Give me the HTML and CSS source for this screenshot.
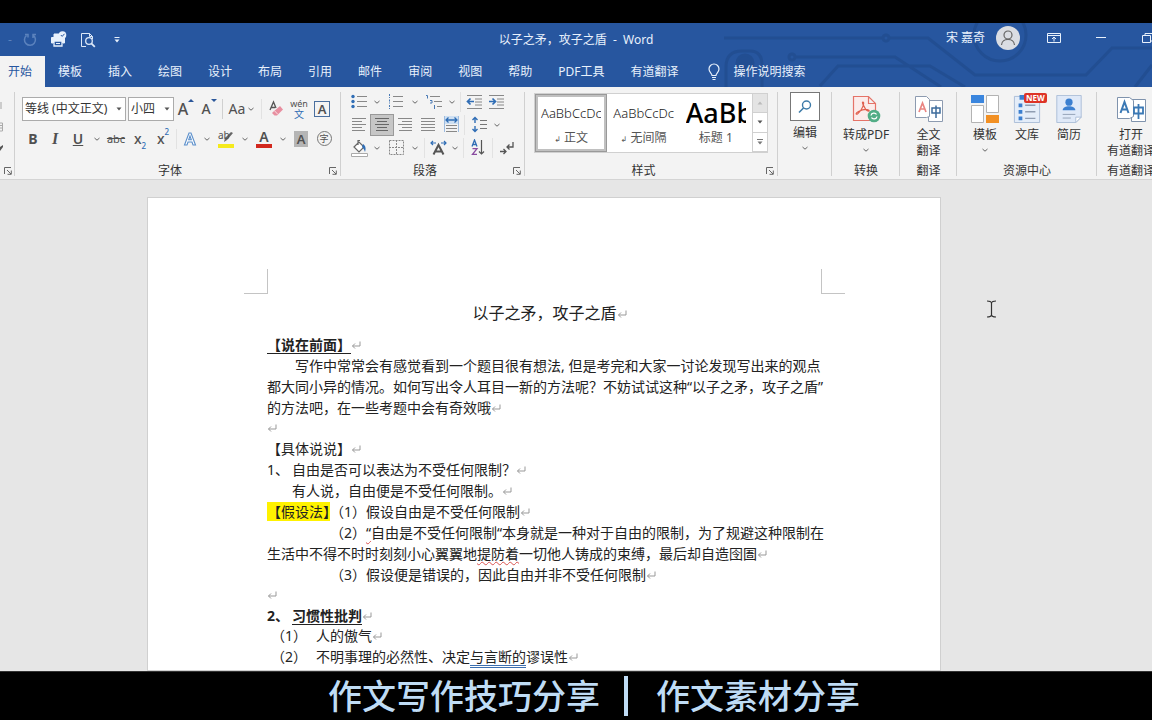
FILE: index.html
```html
<!DOCTYPE html>
<html lang="zh-CN">
<head>
<meta charset="utf-8">
<title>以子之矛，攻子之盾 - Word</title>
<link rel="stylesheet" href="styles.css">
</head>
<body>
<svg class="defs" aria-hidden="true">
  <symbol id="chev" viewBox="0 0 8 8"><path d="M1.500 3 4 5.200 6.500 3" fill="none" stroke="#666"/></symbol>
  <symbol id="tri" viewBox="0 0 8 8"><path d="M1.500 2.500h5L4 5.500z" fill="#555"/></symbol>
  <symbol id="launch" viewBox="0 0 8 8"><path d="M.5 7V.5H7M3 3l4 4M7.300 3.500v3.800H3.500" fill="none" stroke="#666"/></symbol>
  <symbol id="ret" viewBox="0 0 10 10"><path d="M9 1.500V6H1.500M4 3.500 1.500 6 4 8.500" fill="none" stroke="#999"/></symbol>
</svg>

<div class="band"></div>

<header class="head">
  <svg class="circuit" viewBox="0 0 432 64" aria-hidden="true">
    <g fill="none" stroke="#1f4a8a" stroke-width="3" opacity=".6">
      <path d="M4 15h158M170 15h38l47 37h111l26-27h40"/><circle cx="166" cy="15" r="3"/>
      <circle cx="72" cy="34" r="3"/><path d="M76 34h99l46 30M100 63l18-20h92l35 21"/>
      <circle cx="280" cy="12" r="26"/><path d="M6 64V44q0-16 16-16h8q12 0 12 14v22M415 64l17-22"/>
      <circle cx="25" cy="40" r="8" fill="#1f4a8a"/>
    </g>
  </svg>
  <div class="titlebar">
    <div class="quick">
      <span class="dash">-</span>
      <button aria-label="重做"><svg width="16" height="16" viewBox="0 0 16 16"><path d="M11 3.200A5.500 5.500 0 1 1 4.500 3.500M3 2.500h3v3M11 6V2.500h3" fill="none" stroke="#5b82bd" stroke-width="1.500"/></svg></button>
      <button aria-label="快速打印"><svg width="17" height="17" viewBox="0 0 17 17"><path d="M4 6V3h6v3M3 12H1.500V6.500h13V12H13" fill="#e8f1fc" stroke="#e8f1fc"/><path d="M4 10h8v5H4z" fill="#27569f" stroke="#e8f1fc" stroke-width="1.300"/><path d="M6 12.500h4" stroke="#e8f1fc"/><circle cx="12.500" cy="4" r="3.800" fill="#e8f1fc"/><path d="m10.800 4 1.400 1.400 2.300-2.600" fill="none" stroke="#27569f"/></svg></button>
      <button aria-label="打印预览"><svg width="16" height="16" viewBox="0 0 16 16"><path d="M6 14.500H1.500v-13h8l3 3V7M9.500 1.500v3h3" fill="none" stroke="#dce8f8"/><circle cx="9" cy="9" r="3.300" fill="none" stroke="#dce8f8" stroke-width="1.300"/><path d="m11.300 11.300 3.500 3.500" stroke="#dce8f8" stroke-width="1.800"/></svg></button>
      <button aria-label="自定义快速访问工具栏"><svg width="8" height="8" viewBox="0 0 8 8"><path d="M1.500 1.500h5" stroke="#e8f1fc"/><path d="M1.500 3.500h5L4 6.500z" fill="#e8f1fc"/></svg></button>
    </div>
    <h1>以子之矛，攻子之盾&nbsp; -&nbsp; Word</h1>
    <div class="account">
      <span>宋 嘉奇</span>
      <svg class="avatar" width="24" height="24" viewBox="0 0 24 24"><circle cx="12" cy="12" r="12" fill="#dadde3"/><circle cx="12" cy="9" r="4" fill="none" stroke="#666" stroke-width="1.200"/><path d="M5.500 19c.5-7.500 12.500-7.500 13 0" fill="none" stroke="#666" stroke-width="1.200"/></svg>
      <button class="win" aria-label="功能区显示选项"><svg width="14" height="12" viewBox="0 0 14 12"><path d="M.5 1.500h13v9H.5zM.5 3.500h13M7 9.500v-4M5 7l2-2 2 2" fill="none" stroke="#e8f1fc"/></svg></button>
      <button class="win" aria-label="最小化"><svg width="12" height="12" viewBox="0 0 12 12"><path d="M1 5.500h10" stroke="#e8f1fc"/></svg></button>
      <button class="win" aria-label="还原"><svg width="12" height="12" viewBox="0 0 12 12"><path d="M.5 3.500h8v7h-8zM3 3V1.500h8V9H9" fill="none" stroke="#e8f1fc"/></svg></button>
    </div>
  </div>
  <nav class="tabs">
    <button class="active">开始</button><button>模板</button><button>插入</button><button>绘图</button><button>设计</button><button>布局</button><button>引用</button><button>邮件</button><button>审阅</button><button>视图</button><button>帮助</button><button>PDF工具</button><button>有道翻译</button>
    <button class="tell"><svg width="14" height="18" viewBox="0 0 14 18"><path d="M5 12.500C5 10.500 2 9.500 2 6a5 5 0 0 1 10 0c0 3.500-3 4.500-3 6.500zM5 14.500h4M5.500 16.500h3" fill="none" stroke="#e8f1fc" stroke-width="1.200"/></svg>操作说明搜索</button>
  </nav>
</header>

<section class="ribbon">
  <div class="group g-clip">
    <div class="clip">
      <svg width="8" height="12" viewBox="0 0 8 12"><path d="M0 2h2v7H0z" fill="#ccc"/></svg>
      <svg width="8" height="12" viewBox="0 0 8 12"><path d="M0 2h2.500v8H0M0 4.500h2.500M0 7h2.500" fill="none" stroke="#aaa"/></svg>
      <svg width="8" height="12" viewBox="0 0 8 12"><path d="m0 5 3-2v2L0 9z" fill="#555"/></svg>
    </div>
    <div class="glabel"><button class="launch" aria-label="剪贴板选项"><svg width="8" height="8"><use href="#launch"/></svg></button></div>
  </div>

  <div class="group g-font">
    <div class="rows wide">
      <div class="row">
        <label class="combo c-font"><select aria-label="字体"><option>等线 (中文正文)</option></select><svg width="8" height="8"><use href="#tri"/></svg></label>
        <label class="combo c-size"><select aria-label="字号"><option>小四</option></select><svg width="8" height="8"><use href="#tri"/></svg></label>
        <button class="b w24 big" aria-label="增大字号">A<svg class="sup" width="6" height="5" viewBox="0 0 6 5"><path d="M0 4 3 1l3 3z" fill="#2b579a"/></svg></button>
        <button class="b mid" aria-label="减小字号">A<svg class="sup" width="6" height="5" viewBox="0 0 6 5"><path d="m0 1 3 3 3-3z" fill="#2b579a"/></svg></button>
        <i class="sep"></i>
        <button class="b w34 aa" aria-label="更改大小写">Aa<svg width="8" height="8"><use href="#chev"/></svg></button>
        <i class="sep pale"></i>
        <button class="b w24" aria-label="清除格式"><svg width="16" height="18" viewBox="0 0 16 18"><path d="M2 10 5.500 2 8 8M3.500 7.500h3.500" fill="none" stroke="#555" stroke-width="1.300"/><path d="m5 12 7-6 3 3.500-6 6H6.500L4 13z" fill="#e88fa0"/><path d="m6.500 10.800 3.300 3.500" stroke="#f8e0e4"/></svg></button>
        <button class="b wen" aria-label="拼音指南"><span>wén</span><span class="blue">文</span></button>
        <button class="b w24" aria-label="字符边框"><span class="boxed">A</span></button>
      </div>
      <div class="row">
        <button class="b bold">B</button><button class="b ital">I</button><button class="b w24 und"><u>U</u></button>
        <button class="b w14" aria-label="下划线样式"><svg width="8" height="8"><use href="#chev"/></svg></button>
        <button class="b w24 strike"><s>abc</s></button><button class="b sub w24">x<sub>2</sub></button><button class="b sub">x<sup>2</sup></button>
        <i class="sep pale"></i>
        <button class="b" aria-label="文本效果"><svg width="14" height="18" viewBox="0 0 14 18"><path d="M1.500 15 6 3h2l4.500 12H10l-1-3H5l-1 3zM5.700 9.800h2.600L7 6z" fill="#fff" stroke="#5b8fcb" stroke-width="1.100"/></svg></button>
        <button class="b w10" aria-label="文本效果样式"><svg width="8" height="8"><use href="#chev"/></svg></button>
        <button class="b w28 hl" aria-label="突出显示"><span>ab</span><svg width="16" height="18" viewBox="0 0 16 18"><path d="m15 3-6 7-3 2 1-4 6-6z" fill="#666"/><path d="M0 14h16v4H0z" fill="#f5ea1c"/></svg></button>
        <button class="b w10" aria-label="突出显示颜色"><svg width="8" height="8"><use href="#chev"/></svg></button>
        <button class="b w28 fc" aria-label="字体颜色"><span>A</span></button>
        <button class="b w10" aria-label="字体颜色选择"><svg width="8" height="8"><use href="#chev"/></svg></button>
        <button class="b w24" aria-label="字符底纹"><span class="shade">A</span></button>
        <button class="b" aria-label="带圈字符"><span class="ring">字</span></button>
      </div>
    </div>
    <div class="glabel">字体<button class="launch" aria-label="字体选项"><svg width="8" height="8"><use href="#launch"/></svg></button></div>
  </div>

  <div class="group g-para">
    <div class="rows tight">
      <div class="row">
        <button class="b" aria-label="项目符号"><svg width="18" height="16" viewBox="0 0 18 16"><g fill="#2f6db5"><circle cx="3" cy="2.500" r="1.700"/><circle cx="3" cy="7.500" r="1.700"/><circle cx="3" cy="12.500" r="1.700"/></g><path d="M7 2.500h10M7 7.500h10M7 12.500h10" stroke="#888"/></svg></button>
        <button class="b w14" aria-label="项目符号样式"><svg width="8" height="8"><use href="#chev"/></svg></button>
        <button class="b w24" aria-label="编号"><svg width="18" height="16" viewBox="0 0 18 16"><path d="M2.500 0v4M2.500 5.500v4M2.500 11v4" stroke="#4a7ab5" stroke-dasharray="2 1"/><path d="M6 2.500h10M6 7.500h10M6 12.500h10" stroke="#888"/></svg></button>
        <button class="b w14" aria-label="编号样式"><svg width="8" height="8"><use href="#chev"/></svg></button>
        <button class="b w24" aria-label="多级列表"><svg width="18" height="16" viewBox="0 0 18 16"><path d="M1 1.500h1.500v3M5 6.500h2V9H5M9.500 11v4" fill="none" stroke="#4a7ab5"/><path d="M5 2.500h10M9 7.500h8M12 12.500h5" stroke="#888"/></svg></button>
        <button class="b w10" aria-label="多级列表样式"><svg width="8" height="8"><use href="#chev"/></svg></button>
        <i class="sep pale"></i>
        <button class="b" aria-label="减少缩进量"><svg width="17" height="16" viewBox="0 0 17 16"><path d="M1 1.500h15M9 5h7M9 8h7M9 11h7M1 14.500h15" stroke="#888"/><path d="M8 7.500H2M4.500 4.500l-3 3 3 3" fill="none" stroke="#2f6db5" stroke-width="1.700"/></svg></button>
        <button class="b" aria-label="增加缩进量"><svg width="17" height="16" viewBox="0 0 17 16"><path d="M1 1.500h15M9 5h7M9 8h7M9 11h7M1 14.500h15" stroke="#888"/><path d="M1 7.500h6M4.500 4.500l3 3-3 3" fill="none" stroke="#2f6db5" stroke-width="1.700"/></svg></button>
      </div>
      <div class="row">
        <button class="b" aria-label="左对齐"><svg width="14" height="16" viewBox="0 0 14 16"><path d="M0 1.500h14M0 4.500h10M0 7.500h14M0 10.500h10M0 13.500h13" stroke="#888"/></svg></button>
        <button class="b on w24" aria-label="居中"><svg width="14" height="16" viewBox="0 0 14 16"><path d="M0 1.500h14M2 4.500h10M0 7.500h14M2 10.500h10M1 13.500h12" stroke="#666"/></svg></button>
        <button class="b" aria-label="右对齐"><svg width="14" height="16" viewBox="0 0 14 16"><path d="M0 1.500h14M4 4.500h10M0 7.500h14M4 10.500h10M1 13.500h13" stroke="#888"/></svg></button>
        <button class="b w24" aria-label="两端对齐"><svg width="14" height="16" viewBox="0 0 14 16"><path d="M0 1.500h14M0 4.500h14M0 7.500h14M0 10.500h14M0 13.500h14" stroke="#888"/></svg></button>
        <button class="b" aria-label="分散对齐"><svg width="15" height="17" viewBox="0 0 15 17"><path d="M0 0h15v8H0z" fill="#cfe0f2"/><path d="M.5 0v16M14.500 0v16" stroke="#9dbce0"/><path d="M2 4h11M4.500 1.500 2 4l2.500 2.500M10.500 1.500 13 4l-2.500 2.500" fill="none" stroke="#2f6db5" stroke-width="1.300"/><path d="M2 9.500h11M2 12.500h11M2 15.500h11" stroke="#888"/></svg></button>
        <i class="sep pale"></i>
        <button class="b w24" aria-label="行距"><svg width="16" height="17" viewBox="0 0 16 17"><path d="M4 2v5M1.500 4 4 1.500 6.500 4M4 10v5M1.500 13 4 15.500 6.500 13" fill="none" stroke="#2f6db5" stroke-width="1.400"/><path d="M9 4.500h7M9 8.500h7M9 12.500h7" stroke="#777"/></svg></button>
        <button class="b w10" aria-label="行距选项"><svg width="8" height="8"><use href="#chev"/></svg></button>
      </div>
      <div class="row">
        <button class="b" aria-label="底纹"><svg width="17" height="18" viewBox="0 0 17 18"><path d="m3 8 5-5 5 5-5 5zM7 6V1.500h2" fill="#fff" stroke="#666" stroke-width="1.200"/><path d="M12 5c3 2 3 5 2 8-1-3-2-4-3-5z" fill="#2f6db5"/><path d="M.5 14.500h16v3H.5z" fill="#fff" stroke="#aaa"/></svg></button>
        <button class="b w14" aria-label="底纹颜色"><svg width="8" height="8"><use href="#chev"/></svg></button>
        <button class="b w24" aria-label="边框"><svg width="15" height="15" viewBox="0 0 15 15"><path d="M.5.5h14v14H.5zM7.500 0v15M0 7.500h15" fill="none" stroke="#888" stroke-dasharray="2 1"/></svg></button>
        <button class="b w14" aria-label="边框样式"><svg width="8" height="8"><use href="#chev"/></svg></button>
        <i class="sep pale"></i>
        <button class="b" aria-label="中文版式"><svg width="17" height="16" viewBox="0 0 17 16"><path d="M3.500 14.500 8.500 5l5 9.500M5.500 11.500h6" fill="none" stroke="#555" stroke-width="2"/><path d="M1 3h5M3 1 1 3l2 2M16 3h-5M14 1l2 2-2 2" fill="none" stroke="#2f6db5" stroke-width="1.200"/></svg></button>
        <button class="b w10" aria-label="中文版式选项"><svg width="8" height="8"><use href="#chev"/></svg></button>
        <i class="sep pale"></i>
        <button class="b w24" aria-label="排序"><svg width="14" height="17" viewBox="0 0 14 17"><path d="m1 7.500 2.500-6.500L6 7.500M2 5.500h3" fill="none" stroke="#2f6db5" stroke-width="1.300"/><path d="M1.500 9.700H6l-4.500 5.600H6" fill="none" stroke="#8a4ba0" stroke-width="1.300"/><path d="M10.500 1v14M8 12.500l2.500 2.500 2.500-2.500" fill="none" stroke="#555" stroke-width="1.200"/></svg></button>
        <i class="sep pale"></i>
        <button class="b w24" aria-label="显示编辑标记"><svg width="16" height="14" viewBox="0 0 16 14"><path d="M14 1v5H8M10.500 3.500 8 6l2.500 2.500M1 10.500h6M4.500 8 7 10.500 4.500 13" fill="none" stroke="#555" stroke-width="1.300"/></svg></button>
      </div>
    </div>
    <div class="glabel">段落<button class="launch" aria-label="段落选项"><svg width="8" height="8"><use href="#launch"/></svg></button></div>
  </div>

  <div class="group g-style">
    <div class="gallery">
      <button class="style sel"><span class="sample">AaBbCcDc</span><span class="sname"><small>↲</small> 正文</span></button>
      <button class="style"><span class="sample">AaBbCcDc</span><span class="sname"><small>↲</small> 无间隔</span></button>
      <button class="style"><span class="sample h">AaBb</span><span class="sname">标题 1</span></button>
      <div class="scroll">
        <button class="off" aria-label="上一行"><svg width="8" height="8" viewBox="0 0 8 8"><path d="M1.500 5.500h5L4 2.500z" fill="#bbb"/></svg></button>
        <button aria-label="下一行"><svg width="8" height="8"><use href="#tri"/></svg></button>
        <button aria-label="其他"><svg width="8" height="8" viewBox="0 0 8 8"><path d="M1 1.500h6" stroke="#777"/><path d="M1.500 3.500h5L4 6.500z" fill="#777"/></svg></button>
      </div>
    </div>
    <div class="glabel">样式<button class="launch" aria-label="样式选项"><svg width="8" height="8"><use href="#launch"/></svg></button></div>
  </div>

  <div class="group g-edit">
    <div class="bigs">
      <button class="bigb"><span class="find"><svg width="14" height="14" viewBox="0 0 14 14"><circle cx="8.500" cy="5" r="4" fill="none" stroke="#3c7aa8" stroke-width="1.400"/><path d="M5.500 8 1 12.500" stroke="#3c7aa8" stroke-width="1.600"/></svg></span>编辑<svg class="dn" width="8" height="8"><use href="#chev"/></svg></button>
    </div>
  </div>

  <div class="group g-pdf">
    <div class="bigs">
      <button class="bigb"><svg width="30" height="28" viewBox="0 0 30 28"><path d="M2.500 1.500h15l7 7v17h-22zM17.500 1.500v7h7" fill="#fbeceb" stroke="#e57368" stroke-width="1.200"/><path d="M12 7c2 0-1 9-5.500 12-2 1-2-1 1-2.500 4-2 8-2.500 10-1.500s-1 2.500-3-1S10.500 7 12 7z" fill="none" stroke="#e0604f" stroke-width="1.200"/><circle cx="23" cy="21" r="6.300" fill="#52ad86"/><path d="M20 20.500c.5-3 4.500-3 5.500-1M26 21.500c-.5 3-4.500 3-5.500 1" fill="none" stroke="#fff" stroke-width="1.300"/></svg>转成PDF<svg class="dn" width="8" height="8"><use href="#chev"/></svg></button>
    </div>
    <div class="glabel">转换</div>
  </div>

  <div class="group g-trans">
    <div class="bigs">
      <button class="bigb"><svg width="30" height="28" viewBox="0 0 30 28"><path d="M14.500 5.500h14v21h-14z" fill="#fff" stroke="#8d9bb0"/><path d="M1.500 1.500h11l3 3v17l-3 1h-11z" fill="#fff" stroke="#8d9bb0"/><path d="m5 17 3.500-9L12 17M6.200 14h4.600" fill="none" stroke="#ea8582" stroke-width="1.700"/><path d="M18 13h8v5h-8zM22 10.500V23" fill="none" stroke="#3e6c9c" stroke-width="1.500"/></svg>全文<br>翻译</button>
    </div>
    <div class="glabel">翻译</div>
  </div>

  <div class="group g-res">
    <div class="bigs">
      <button class="bigb"><svg width="30" height="28" viewBox="0 0 30 28"><path d="M1 0h13v8H1z" fill="#3b86de"/><path d="M16.500.5h12v17h-12zM1.500 10.500h12v17h-12z" fill="#fff" stroke="#b3b3b3"/><path d="M16 20h13v8H16z" fill="#f29023"/></svg>模板<svg class="dn" width="8" height="8"><use href="#chev"/></svg></button>
      <button class="bigb"><span class="new">NEW</span><svg width="28" height="30" viewBox="0 0 28 30"><path d="M.500 1.500h27v28H.500z" fill="#e4edf9" stroke="#a8bbd6"/><g fill="#3b7fd0"><path d="M6 0h5v5H6zM5 9h4v4H5zM5 16h4v4H5zM5 23h4v4H5z"/></g><path d="M12 11h11M12 18h11M12 25h11" stroke="#8f9db2" stroke-width="1.500"/></svg>文库</button>
      <button class="bigb"><svg width="28" height="31" viewBox="0 0 28 31"><path d="M.500.500h27v24l-6 6H.500z" fill="#dfe9f8" stroke="#a8bbd6"/><circle cx="14" cy="8" r="4" fill="#3b7fd0"/><path d="M7 17c0-6 14-6 14 0z" fill="#3b7fd0"/><path d="M7 21.500h14M7 25.500h9" stroke="#8f9db2"/><path d="M21.500 30.500v-6h6z" fill="#fff" stroke="#a8bbd6"/></svg>简历</button>
    </div>
    <div class="glabel">资源中心</div>
  </div>

  <div class="group g-open">
    <div class="bigs">
      <button class="bigb"><svg width="32" height="28" viewBox="0 0 32 28"><path d="M16.500 4.500h14v22h-14z" fill="#fff" stroke="#7f93ad"/><path d="M2.500 2.500h12l4 3v16l-4 2h-12z" fill="#fff" stroke="#7f93ad"/><path d="m5.500 18 4-11 4 11M7 14.500h5" fill="none" stroke="#3b79b5" stroke-width="2"/><path d="M19 12.500h9v6h-9zM23.500 9v15" fill="none" stroke="#3b79b5" stroke-width="1.800"/></svg>打开<br>有道翻译</button>
    </div>
    <div class="glabel">有道翻译</div>
  </div>
</section>

<main class="work">
  <article class="page">
    <div class="marks"><i class="m-left"></i><i class="m-right"></i></div>
    <div class="text">
      <h2>以子之矛，攻子之盾<svg class="ret" width="10" height="10"><use href="#ret"/></svg></h2>
      <p><b class="ul">【说在前面】</b><svg class="ret" width="10" height="10"><use href="#ret"/></svg></p>
      <p class="indent">写作中常常会有感觉看到一个题目很有想法, 但是考完和大家一讨论发现写出来的观点<br>都大同小异的情况。如何写出令人耳目一新的方法呢？不妨试试这种“以子之矛，攻子之盾”<br>的方法吧，在一些考题中会有奇效哦<svg class="ret" width="10" height="10"><use href="#ret"/></svg></p>
      <p class="blank"><svg class="ret" width="10" height="10"><use href="#ret"/></svg></p>
      <p>【具体说说】<svg class="ret" width="10" height="10"><use href="#ret"/></svg></p>
      <p><span class="num">1、</span>自由是否可以表达为不受任何限制？<svg class="ret" width="10" height="10"><use href="#ret"/></svg></p>
      <p class="kai"><span class="num"></span>有人说，自由便是不受任何限制。<svg class="ret" width="10" height="10"><use href="#ret"/></svg></p>
      <p><span class="case"><mark>【假设法<span class="half">】</span></mark></span>（1）假设自由是不受任何限制<svg class="ret" width="10" height="10"><use href="#ret"/></svg></p>
      <p><span class="case"></span>（2）<span class="err">“</span>自由是不受任何限制“本身就是一种对于自由的限制，为了规避这种限制在<br>生活中不得不时时刻刻小心翼翼地<span class="err">提防着</span>一切他人铸成的束缚，最后却自造囹圄<svg class="ret" width="10" height="10"><use href="#ret"/></svg></p>
      <p><span class="case"></span>（3）假设便是错误的，因此自由并非不受任何限制<svg class="ret" width="10" height="10"><use href="#ret"/></svg></p>
      <p class="blank"><svg class="ret" width="10" height="10"><use href="#ret"/></svg></p>
      <p><b><span class="num">2、</span><span class="ul">习惯性批判</span></b><svg class="ret" width="10" height="10"><use href="#ret"/></svg></p>
      <p class="blank"><span class="item">（1）</span>人的傲气<svg class="ret" width="10" height="10"><use href="#ret"/></svg></p>
      <p><span class="item">（2）</span>不明事理的必然性、决定<span class="gram">与言断的</span>谬误性<svg class="ret" width="10" height="10"><use href="#ret"/></svg></p>
    </div>
  </article>
  <svg class="ibeam" width="11" height="18" viewBox="0 0 11 18"><path d="M1 1q4 0 4.500 2Q6 1 10 1M1 17q4 0 4.500-2Q6 17 10 17M5.500 3v12" fill="none" stroke="#333" stroke-width="1.200"/></svg>
</main>

<footer class="caption"><span>作文写作技巧分享</span><i></i><span>作文素材分享</span></footer>
</body>
</html>
```
FILE: styles.css
```css
* { box-sizing: border-box; }
html, body { height: 100%; }
body {
  margin: 0;
  display: flex;
  flex-direction: column;
  overflow: hidden;
  background: #000;
  color: #333;
  font: 12px/16px "Noto Sans", "Noto Sans CJK SC", sans-serif;
}
button {
  margin: 0;
  padding: 0;
  border: 0;
  background: none;
  color: inherit;
  font: inherit;
}
svg { flex: none; }
.defs { position: absolute; width: 0; height: 0; }
.band { flex: none; height: 23px; }

/* title bar and tabs */
.head {
  position: relative;
  flex: none;
  overflow: hidden;
  background: #27569f;
  color: #e8f1fc;
}
.circuit { position: absolute; top: 0; right: 0; width: 432px; height: 64px; }
.titlebar {
  position: relative;
  display: grid;
  grid-template-columns: 1fr auto 1fr;
  align-items: center;
  height: 33px;
}
.titlebar h1 { margin: 0; font-size: 12px; font-weight: 400; }
.quick { display: flex; align-items: center; padding-left: 5px; }
.quick button { display: grid; place-items: center; width: 29px; height: 24px; }
.dash { width: 10px; text-align: center; color: #5b82bd; }
.account {
  display: flex;
  justify-content: flex-end;
  align-items: center;
  height: 30px;
  margin: 0 -19px 3px 0;
}
.avatar { margin: 0 10px 0 11px; }
.win { display: grid; place-items: center; flex: none; width: 47px; height: 30px; }
.tabs { position: relative; display: flex; margin-left: -5px; height: 31px; }
.tabs button { padding: 0 13px; white-space: nowrap; }
.tabs .active { background: #f3f3f3; color: #27569f; }
.tabs .tell { display: flex; align-items: center; gap: 12px; padding-left: 16px; }

/* ribbon */
.ribbon {
  flex: none;
  display: flex;
  overflow: hidden;
  height: 93px;
  background: #f3f3f3;
  border-bottom: 1px solid #d4d4d4;
}
.group {
  position: relative;
  flex: none;
  display: flex;
  flex-direction: column;
  justify-content: space-between;
}
.group::after {
  content: "";
  position: absolute;
  top: 5px;
  right: 0;
  bottom: 3px;
  border-right: 1px solid #d0d0d0;
}
.g-clip { width: 15px; }
.g-font { width: 326px; }
.g-para { width: 184px; }
.g-style { width: 253px; }
.g-edit { width: 54px; }
.g-pdf { width: 68px; }
.g-trans { width: 57px; }
.g-res { width: 140px; }
.g-open { width: 68px; }
.glabel { position: relative; height: 18px; line-height: 20px; text-align: center; }
.glabel:has(.launch) { padding-right: 16px; }
.launch { position: absolute; right: 4px; top: 6px; width: 8px; height: 8px; line-height: 0; }
.clip { display: flex; flex-direction: column; gap: 9px; padding-top: 13px; }

.rows { display: flex; flex-direction: column; }
.wide { gap: 5px; padding: 9px 0 0 7px; }
.tight { padding: 3px 0 0 7px; }
.row { display: flex; align-items: center; height: 25px; }
.tight .row { height: 23px; }
.b {
  position: relative;
  flex: none;
  display: flex;
  align-items: center;
  justify-content: center;
  width: 22px;
  height: 22px;
  color: #505050;
}
.w10 { width: 12px; }
.w14 { width: 14px; }
.w24 { width: 24px; }
.w28 { width: 26px; }
.w34 { width: 34px; }
.sep { flex: none; width: 1px; height: 20px; margin: 0 2px; background: #d0d0d0; }
.sep.pale { background: #e2e2e2; }
.on { background: #c6c6c6; border: 1px solid #999; }
.combo { position: relative; height: 24px; margin-right: 2px; }
.combo select {
  width: 100%;
  height: 24px;
  padding: 0 2px;
  appearance: none;
  border: 1px solid #ababab;
  border-radius: 0;
  background: #fff;
  color: #333;
  font: inherit;
}
.combo svg { position: absolute; right: 3px; top: 8px; }
.c-font { width: 104px; }
.c-size { width: 46px; margin-right: 0; }
.big { font-size: 16px; font-weight: 500; }
.mid { font-size: 14px; font-weight: 500; }
.sup { align-self: flex-start; }
.aa { gap: 2px; font-size: 14px; }
.wen { flex-direction: column; font-size: 9px; line-height: 10px; }
.wen .blue { color: #2f6db5; font-size: 10px; line-height: 10px; }
.boxed { width: 16px; height: 16px; border: 1px solid #4a6f9f; font-weight: 600; font-size: 13px; line-height: 14px; }
.bold { font-size: 14px; font-weight: 700; }
.ital { font: italic 700 16px "Liberation Serif", serif; }
.und { font-size: 14px; font-weight: 600; }
.strike { font-size: 11px; }
.sub { font-size: 14px; font-weight: 500; }
.sub sub, .sub sup { font-size: 8px; color: #2f6db5; line-height: 8px; }
.sub sub { align-self: flex-end; }
.sub sup { align-self: flex-start; }
.hl span { position: absolute; left: 5px; top: 0; font-size: 10px; line-height: 14px; }
.fc span { width: 16px; border-bottom: 4px solid #d2281e; font-size: 14px; font-weight: 600; line-height: 14px; }
.shade { width: 14px; background: #b5b5b5; font-size: 13px; font-weight: 600; line-height: 16px; }
.ring { width: 15px; height: 15px; border: 1px solid #777; border-radius: 50%; font-size: 9px; line-height: 13px; }

/* style gallery */
.gallery {
  display: flex;
  width: 234px;
  height: 60px;
  margin: 6px 0 0 9px;
  border: 1px solid #d0d0d0;
  background: #fff;
}
.style {
  flex: 1;
  display: flex;
  flex-direction: column;
  justify-content: space-between;
  min-width: 0;
  padding: 4px 6px 6px;
}
.style.sel { padding: 1px 3px 3px; border: 3px solid #c0c0c0; outline: 1px solid #999; outline-offset: -1px; }
.sample { height: 30px; overflow: hidden; color: #222; font-size: 13px; font-weight: 300; line-height: 30px; text-align: left; }
.sample.h { color: #000; font-size: 27px; font-weight: 500; }
.sname { color: #555; text-align: center; white-space: nowrap; }
.sname small { font: 8px "DejaVu Sans", sans-serif; }
.scroll { display: flex; flex-direction: column; width: 15px; }
.scroll button { flex: 1; display: grid; place-items: center; border: solid #d0d0d0; border-width: 0 0 1px 1px; }
.scroll .off { background: #e4e4e4; }

/* large buttons */
.bigs { display: flex; justify-content: center; padding-top: 8px; }
.bigb {
  position: relative;
  display: flex;
  flex-direction: column;
  align-items: center;
  width: 42px;
  white-space: nowrap;
}
.bigb > svg:not(.dn) { height: 28px; margin-bottom: 4px; }
.dn { margin-top: 3px; }
.g-edit .bigs { padding-top: 5px; }
.find { display: grid; place-items: center; width: 30px; height: 29px; margin-bottom: 4px; border: 1px solid #777; background: #fff; }
.new {
  position: absolute;
  top: -2px;
  left: 18px;
  padding: 0 2px;
  border-radius: 2px;
  background: #dd3427;
  color: #fff;
  font-size: 8px;
  font-weight: 700;
  line-height: 10px;
}

/* document */
.work {
  position: relative;
  flex: 1;
  min-height: 0;
  overflow: hidden;
  padding: 17px 211px 0 147px;
  background: #e6e6e6;
}
.page { min-height: 100%; padding: 71px 95px 0 96px; border: 1px solid #d0d0d0; background: #fff; }
.marks { display: flex; justify-content: space-between; }
.marks i { width: 24px; height: 25px; border: solid #c4c4c4; border-width: 0 0 1px; }
.marks .m-left { border-right-width: 1px; }
.marks .m-right { border-left-width: 1px; }
.text { padding: 0 23px; color: #222; font-size: 14px; line-height: 21px; white-space: nowrap; }
.text h2 { margin: 9px 0 10px; font-size: 16px; font-weight: 400; line-height: 21px; text-align: center; }
.text h2 .ret { margin-right: -10px; }
.text p { margin: 0; }
.text .indent { text-indent: 28px; }
.text .blank { line-height: 20px; }
.ul { text-decoration: underline; text-underline-offset: 3px; }
.num { display: inline-block; width: 25px; }
.case { display: inline-block; width: 63px; }
.case mark { background: #fff200; color: inherit; }
.half { font-feature-settings: "halt"; }
.item { display: inline-block; width: 49px; padding-left: 4px; }
.kai { font-family: "AR PL UKai CN", KaiTi, STKaiti, "Noto Sans CJK SC", serif; }
.err { text-decoration: underline wavy #d9534f 1px; text-underline-offset: 2px; }
.gram { text-decoration: underline double #3c6fb0 1px; text-underline-offset: 3px; }
.ibeam { position: absolute; left: 986px; top: 120px; }

/* video caption */
.caption {
  flex: none;
  display: flex;
  align-items: center;
  justify-content: center;
  gap: 24px;
  height: 49px;
  padding-left: 36px;
  border-top: 1px solid #333;
  color: #bfdcf5;
  font-size: 34px;
  font-weight: 500;
  line-height: 48px;
}
.caption i { width: 4px; height: 40px; margin-right: 4px; background: #bfdcf5; }
```
